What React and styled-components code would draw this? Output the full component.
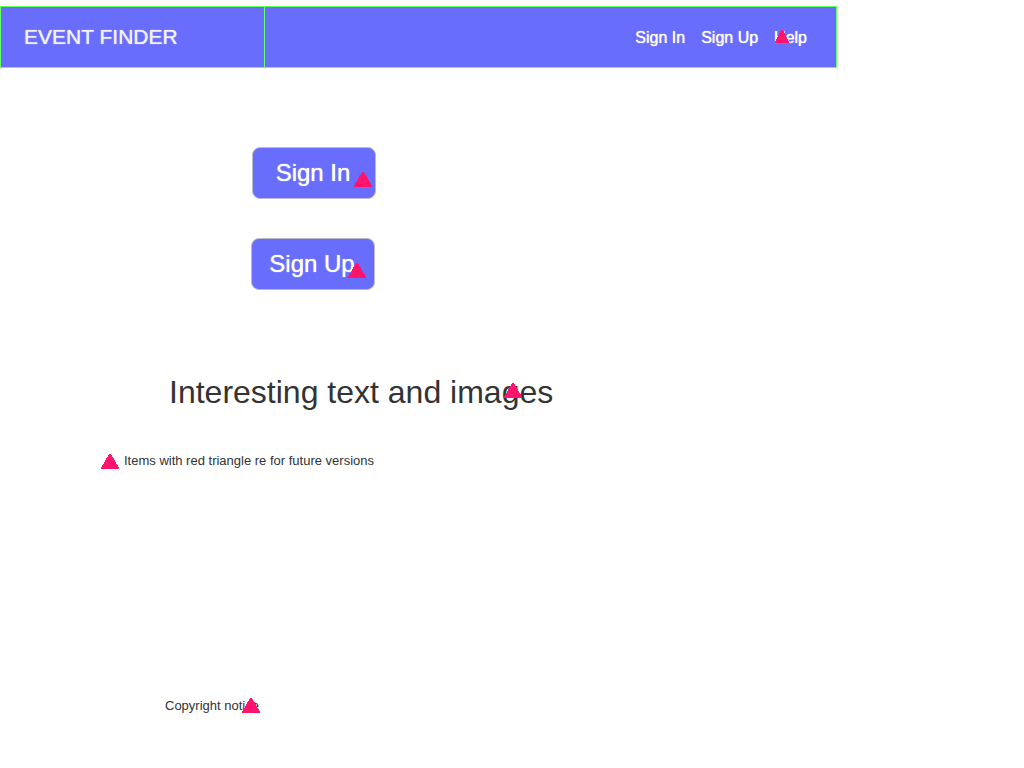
import React from "react";
import styled, { createGlobalStyle } from "styled-components";

const GlobalStyle = createGlobalStyle`
  * { box-sizing: border-box; }
  body {
    margin: 0;
    background: #ffffff;
    color: #333333;
    font-family: "Liberation Sans", Arial, Helvetica, sans-serif;
    font-size: 13px;
    line-height: 16px;
  }
`;

const Page = styled.div`
  max-width: 837px;
  padding-top: 6px;
`;

const Header = styled.header`
  display: flex;
  height: 62px;
  border: 1px solid #66ff66;
  background: #696dfc;
  color: #ffffff;
`;

const Brand = styled.div`
  display: flex;
  align-items: center;
  width: 264px;
  padding-left: 23px;
  border-right: 1px solid #66ff66;
  color: #f2f2f2;
  font-size: 21px;
  line-height: 24px;
  text-shadow: 0 0 1px currentColor;
`;

const Nav = styled.nav`
  display: flex;
  flex: 1;
  align-items: center;
  justify-content: flex-end;
  gap: 16px;
  padding: 2px 29px 0 0;
`;

const NavLink = styled.a`
  position: relative;
  color: inherit;
  font-size: 16px;
  line-height: 18px;
  text-decoration: none;
  text-shadow: 0 0 1px currentColor;
`;

const Main = styled.main`
  display: flex;
  flex-direction: column;
  align-items: flex-start;
  padding-top: 79px;
`;

const ActionButton = styled.button`
  position: relative;
  width: 124px;
  height: 52px;
  margin: 0 0 39px ${(p) => p.$indent}px;
  padding: 0 2px 0 0;
  border: 1px solid #bbbbcc;
  border-radius: 8px;
  background: #696dfc;
  color: #ffffff;
  font-family: inherit;
  font-size: 24px;
  line-height: 28px;
  text-shadow: 0 0 1px currentColor;
`;

const Headline = styled.h1`
  position: relative;
  margin: 45px 0 0 169px;
  font-size: 32px;
  font-weight: 400;
  line-height: 36px;
`;

const Legend = styled.p`
  display: flex;
  align-items: flex-end;
  gap: 5px;
  margin: 43px 0 0 101px;
`;

const Footer = styled.footer`
  display: flex;
  padding: 229px 0 54px 165px;
`;

const Notice = styled.span`
  position: relative;
`;

const Triangle = styled.svg`
  display: block;
  flex: none;
  width: ${(p) => (p.$small ? 14 : 18)}px;
  height: ${(p) => (p.$small ? 13 : 15)}px;
`;

const OverlayTriangle = styled(Triangle)`
  position: absolute;
  left: ${(p) => p.$left}px;
  top: ${(p) => p.$top}px;
`;

function FutureMark({ small, left, top }) {
  const Mark = left === undefined ? Triangle : OverlayTriangle;
  return (
    <Mark
      $small={small}
      $left={left}
      $top={top}
      viewBox="0 0 18 15"
      preserveAspectRatio="none"
      shapeRendering="crispEdges"
      aria-hidden="true"
    >
      <path d="M8 0H10L18 14V15H0V14Z" fill="#ff146e" />
    </Mark>
  );
}

export default function App() {
  return (
    <>
      <GlobalStyle />
      <Page>
        <Header>
          <Brand>EVENT FINDER</Brand>
          <Nav aria-label="Main">
            <NavLink href="#sign-in">Sign In</NavLink>
            <NavLink href="#sign-up">Sign Up</NavLink>
            <NavLink href="#help">
              Help
              <FutureMark small left={1} top={1} />
            </NavLink>
          </Nav>
        </Header>
        <Main>
          <ActionButton type="button" $indent={252}>
            Sign In
            <FutureMark left={101} top={24} />
          </ActionButton>
          <ActionButton type="button" $indent={251}>
            Sign Up
            <FutureMark left={96} top={24} />
          </ActionButton>
          <Headline>
            Interesting text and images
            <FutureMark left={335} top={9} />
          </Headline>
          <Legend>
            <FutureMark />
            Items with red triangle re for future versions
          </Legend>
        </Main>
        <Footer>
          <Notice>
            Copyright notice
            <FutureMark left={77} top={0} />
          </Notice>
        </Footer>
      </Page>
    </>
  );
}
